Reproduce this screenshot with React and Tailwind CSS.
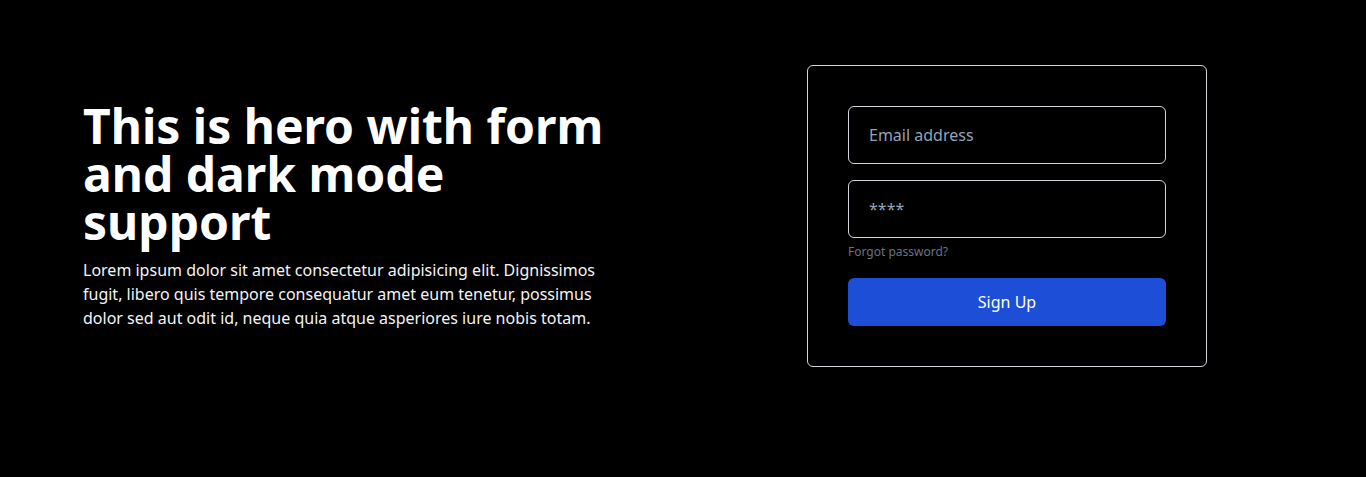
export default function App() {
  return (
    <div
      className="min-h-screen w-full bg-black text-white"
      style={{ fontFamily: '"Noto Sans", "Open Sans", sans-serif' }}
    >
      <div className="flex items-center justify-between pl-[83px] pr-[159px] pt-[65px]">
        <div className="w-[531px]">
          <h1 className="text-5xl font-bold leading-none text-white">
            This is hero with form and dark mode support
          </h1>
          <p className="mt-3 text-base leading-6 text-[#f3f4f6]">
            Lorem ipsum dolor sit amet consectetur adipisicing elit. Dignissimos fugit, libero quis tempore
            consequatur amet eum tenetur, possimus dolor sed aut odit id, neque quia atque asperiores iure
            nobis totam.
          </p>
        </div>
        <div className="w-[400px] rounded-md border border-[#d1d5db] p-10">
          <form className="flex flex-col" onSubmit={(e) => e.preventDefault()}>
            <input
              type="email"
              placeholder="Email address"
              className="w-full rounded-md border border-[#d1d5db] bg-black px-5 py-4 text-base leading-6 text-white placeholder:text-[#94a3b8] outline-none"
            />
            <input
              type="password"
              placeholder="****"
              className="mt-4 w-full rounded-md border border-[#d1d5db] bg-black px-5 py-4 text-base leading-6 text-white placeholder:text-[#94a3b8] outline-none"
            />
            <a href="#" className="mt-[6px] text-xs leading-4 text-[#6b7280]">
              Forgot password?
            </a>
            <button
              type="submit"
              className="mt-[18px] h-12 w-full rounded-md bg-[#1d4ed8] text-base text-white"
            >
              Sign Up
            </button>
          </form>
        </div>
      </div>
    </div>
  );
}
